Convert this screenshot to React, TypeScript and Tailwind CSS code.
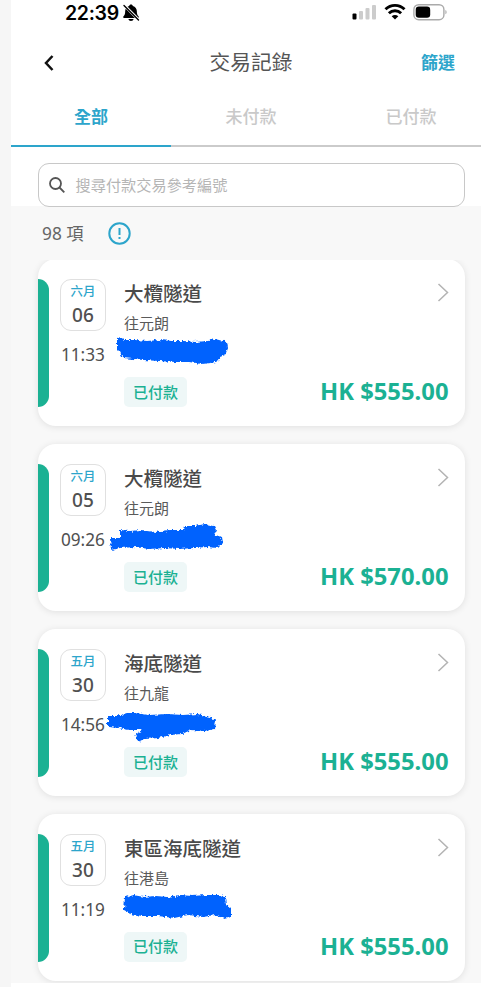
import React from 'react';
import clsx from 'clsx';

interface Transaction {
  id: number;
  month: string;
  day: string;
  time: string;
  title: string;
  direction: string;
  amount: string;
  // outline of the marker stroke, in card coordinates
  marker: string;
}

const transactions: Transaction[] = [
  {
    id: 1,
    month: '六月',
    day: '06',
    time: '11:33',
    title: '大欖隧道',
    direction: '往元朗',
    amount: 'HK $555.00',
    marker:
      'M80 79 L84 78 L87 81 L99 81 L110 82 L122 81 L134 82 L147 82 L158 83 L171 82 L179 80 L183 81 L190 83 L191 89 L189 95 L184 97 L182 102 L174 104 L165 105 L152 103 L138 103 L122 102 L106 101 L96 100 L86 99 L83 93 L80 90 Z',
  },
  {
    id: 2,
    month: '六月',
    day: '05',
    time: '09:26',
    title: '大欖隧道',
    direction: '往元朗',
    amount: 'HK $570.00',
    marker:
      'M83 86 L92 87 L104 86 L118 88 L132 86 L147 86 L148 82 L158 82 L168 80 L177 82 L179 86 L177 91 L185 93 L186 99 L181 104 L170 103 L158 104 L142 105 L128 104 L112 105 L98 103 L83 104 L74 106 L73 94 L83 94 Z',
  },
  {
    id: 3,
    month: '五月',
    day: '30',
    time: '14:56',
    title: '海底隧道',
    direction: '往九龍',
    amount: 'HK $555.00',
    marker:
      'M71 87 L80 87 L90 84 L98 84 L112 86 L130 85 L146 86 L160 85 L173 88 L179 91 L178 100 L168 102 L154 101 L145 105 L133 106 L121 109 L107 110 L101 113 L98 106 L106 101 L92 101 L82 99 L71 98 Z',
  },
  {
    id: 4,
    month: '五月',
    day: '30',
    time: '11:19',
    title: '東區海底隧道',
    direction: '往港島',
    amount: 'HK $555.00',
    marker:
      'M88 83 L96 81 L107 83 L119 82 L131 83 L143 81 L155 82 L169 81 L183 81 L188 83 L189 90 L194 94 L194 103 L187 105 L178 101 L166 103 L151 101 L137 104 L121 102 L105 102 L94 100 L87 96 Z',
  },
];

const tabs = ['全部', '未付款', '已付款'];

function StatusBar() {
  return (
    <div className="flex h-[30px] items-start text-black">
      <span className="ml-[54px] mt-[1px] w-[58px] font-[Inter,sans-serif] text-[19.5px] font-semibold leading-6 tracking-[-0.3px]">
        22:39
      </span>
      <svg className="mt-1" width="17" height="18" viewBox="0 0 17 18">
        <path d="M8 .4c1 0 1.700.6 1.900 1.500 2.500.7 3.900 2.600 3.900 5.200 0 3.200.8 4.200 1.700 5.200.6.700.3 1.800-.7 1.800H1.200c-1 0-1.300-1.100-.7-1.800 1-1 1.700-2 1.700-5.200 0-2.600 1.400-4.500 3.900-5.200C6.300 1 7 .4 8 .4ZM5.400 15h5.200c-.2 1.300-1.300 2-2.600 2s-2.400-.7-2.600-2Z" fill="currentColor" />
        <path d="M1.200 1.200 15.600 15.700" stroke="white" strokeWidth="2.800" />
        <path d="M1 1.400 15.500 16" stroke="currentColor" strokeWidth="1.400" strokeLinecap="round" />
      </svg>
      <svg className="ml-auto mt-1" width="25" height="17" viewBox="0 0 25 17">
        <rect x="0.500" y="9.500" width="4" height="6" rx="1" fill="#000" />
        <rect x="7" y="7" width="4" height="8.500" rx="1" fill="#ccc" />
        <rect x="13.500" y="4" width="4" height="11.500" rx="1" fill="#ccc" />
        <rect x="20" y="1" width="4" height="14.500" rx="1" fill="#ccc" />
      </svg>
      <svg className="ml-[7px] mt-[3px]" width="22" height="17" viewBox="0 0 22 17" fill="none" stroke="#000" strokeWidth="2.900">
        <path d="M1.500 6.300C6.800 1 15.200 1 20.500 6.300" />
        <path d="M4.900 10.200c3.400-3.300 8.800-3.300 12.200 0" />
        <path d="M11 16.600 7.700 13.300c1.800-1.700 4.800-1.700 6.600 0Z" fill="#000" stroke="none" />
      </svg>
      <svg className="ml-[7px] mr-[33px] mt-1" width="35" height="17" viewBox="0 0 35 17">
        <rect x="0.900" y="0.700" width="30" height="15" rx="4.800" fill="none" stroke="#aaa" strokeWidth="1.400" />
        <rect x="2.700" y="2.500" width="14.500" height="11.300" rx="3.200" fill="#000" />
        <path d="M32.400 6v4.300c1.600-.6 1.600-3.700 0-4.300Z" fill="#aaa" />
      </svg>
    </div>
  );
}

function TransactionCard({ item }: { item: Transaction }) {
  return (
    <article className="relative flex h-[167px] shrink-0 rounded-[18px] bg-white pt-5 shadow-[0_1px_7px_rgba(0,0,0,0.1)]">
      <div className="h-32 w-[11px] rounded-r-[11px] bg-[#1bb193]" />

      <div className="ml-[11.300px] flex w-[46px] flex-col items-center">
        <div className="flex h-[52px] w-[46px] flex-col items-center rounded-[11px] border-[1.500px] border-[#e0e0e0]">
          <span className="mt-[3px] text-[12.500px] font-medium leading-[18px] text-[#2da5cb]">{item.month}</span>
          <span className="mt-0.5 text-[19px] font-medium leading-[24px] text-[#505050]">{item.day}</span>
        </div>
        <span className="mt-3 text-[17.200px] leading-6 text-[#505050]">{item.time}</span>
      </div>

      <div className="ml-[18px] flex flex-col items-start">
        <h2 className="mt-px whitespace-nowrap text-[19.500px] font-medium leading-7 text-[#4a4a4a]">{item.title}</h2>
        <p className="mt-[3px] text-[15px] leading-6 text-[#5a5a5a]">{item.direction}</p>
        <span className="mt-[42px] flex h-[30px] w-[63px] items-center justify-center rounded-[5px] bg-[#eef7f7] text-[15px] font-medium text-[#1bb193]">
          已付款
        </span>
      </div>

      <div className="ml-auto mr-[16.500px] flex flex-col items-end">
        <svg className="mt-[3px]" width="12" height="21" viewBox="0 0 12 21" fill="none" stroke="#b3b3b3" strokeWidth="1.500">
          <path d="M1.500 2 10.500 10.500 1.500 19" />
        </svg>
        <span className="mt-[72px] whitespace-nowrap text-[23.800px] font-bold leading-8 text-[#1bb193]">{item.amount}</span>
      </div>

      <svg className="absolute -left-px top-0" width="220" height="125" viewBox="0 0 220 125">
        <filter id={`rough-${item.id}`}>
          <feTurbulence type="fractalNoise" baseFrequency="0.35" numOctaves="2" seed={item.id} />
          <feDisplacementMap in="SourceGraphic" scale="5" xChannelSelector="R" yChannelSelector="G" />
          <feGaussianBlur stdDeviation="0.5" />
        </filter>
        <path d={item.marker} fill="#0062fe" filter={`url(#rough-${item.id})`} />
      </svg>
    </article>
  );
}

export default function App() {
  return (
    <div className="flex h-[987px] w-[481px] overflow-hidden bg-[#f6f6f6] pl-[11px] font-['Noto_Sans','Noto_Sans_CJK_TC',sans-serif]">
      <main className="flex min-w-0 flex-1 flex-col bg-[#f8f8f8]">
        <div className="h-[206px] shrink-0 bg-white">
          <StatusBar />

          <header className="flex h-16 items-center justify-between pl-[32px] pr-[26px]">
            <svg className="mt-0.5" width="11" height="18" viewBox="0 0 11 18" fill="none" stroke="#111" strokeWidth="2.500">
              <path d="M9.500 2 3 9 9.500 16" />
            </svg>
            <h1 className="ml-[27px] mt-0.5 text-[20.700px] text-[#555]">交易記錄</h1>
            <button className="mt-0.5 text-[17px] font-bold text-[#2da5cb]">篩選</button>
          </header>

          <nav className="flex h-[52.500px]">
            {tabs.map((tab, i) => (
              <button
                key={tab}
                className={clsx(
                  'flex w-40 shrink-0 justify-center border-b-2 pt-[11px] text-[17px] leading-6',
                  i === 0 ? 'border-[#2da5cb] font-bold text-[#2da5cb]' : 'border-[#cbcbcb] font-medium text-[#c9c9c9]',
                )}
              >
                {tab}
              </button>
            ))}
          </nav>

          <div className="ml-[26.500px] mr-4 mt-4 flex h-[44px] items-center rounded-[11px] border-[1.500px] border-[#c8c8c8] bg-white pl-[10px]">
            <svg width="16" height="16" viewBox="0 0 16 16" fill="none" stroke="#555" strokeWidth="1.800">
              <circle cx="6.500" cy="6.500" r="5.500" />
              <path d="m10.500 10.500 4.800 4.800" />
            </svg>
            <span className="ml-[11px] mt-px text-[15.200px] text-[#b5b5b5]">搜尋付款交易參考編號</span>
          </div>
        </div>

        <div className="flex h-[54px] shrink-0 items-center pl-[31px] pt-px">
          <span className="mt-px text-[17.300px] text-[#666]">98 項</span>
          <svg className="ml-6" width="23" height="23" viewBox="0 0 23 23" fill="none" stroke="#2da5cb" strokeWidth="2">
            <circle cx="11.500" cy="11.500" r="10.200" />
            <path d="M11.500 6v7M11.500 15v2" />
          </svg>
        </div>

        <section className="flex h-[723px] flex-col overflow-hidden pl-[26.600px] pr-4">
          <div className="-mt-[0.700px] flex flex-col gap-[17.800px]">
            {transactions.map((item) => (
              <TransactionCard key={item.id} item={item} />
            ))}
          </div>
        </section>
        <div className="h-1 shrink-0 bg-white" />
      </main>
    </div>
  );
}
